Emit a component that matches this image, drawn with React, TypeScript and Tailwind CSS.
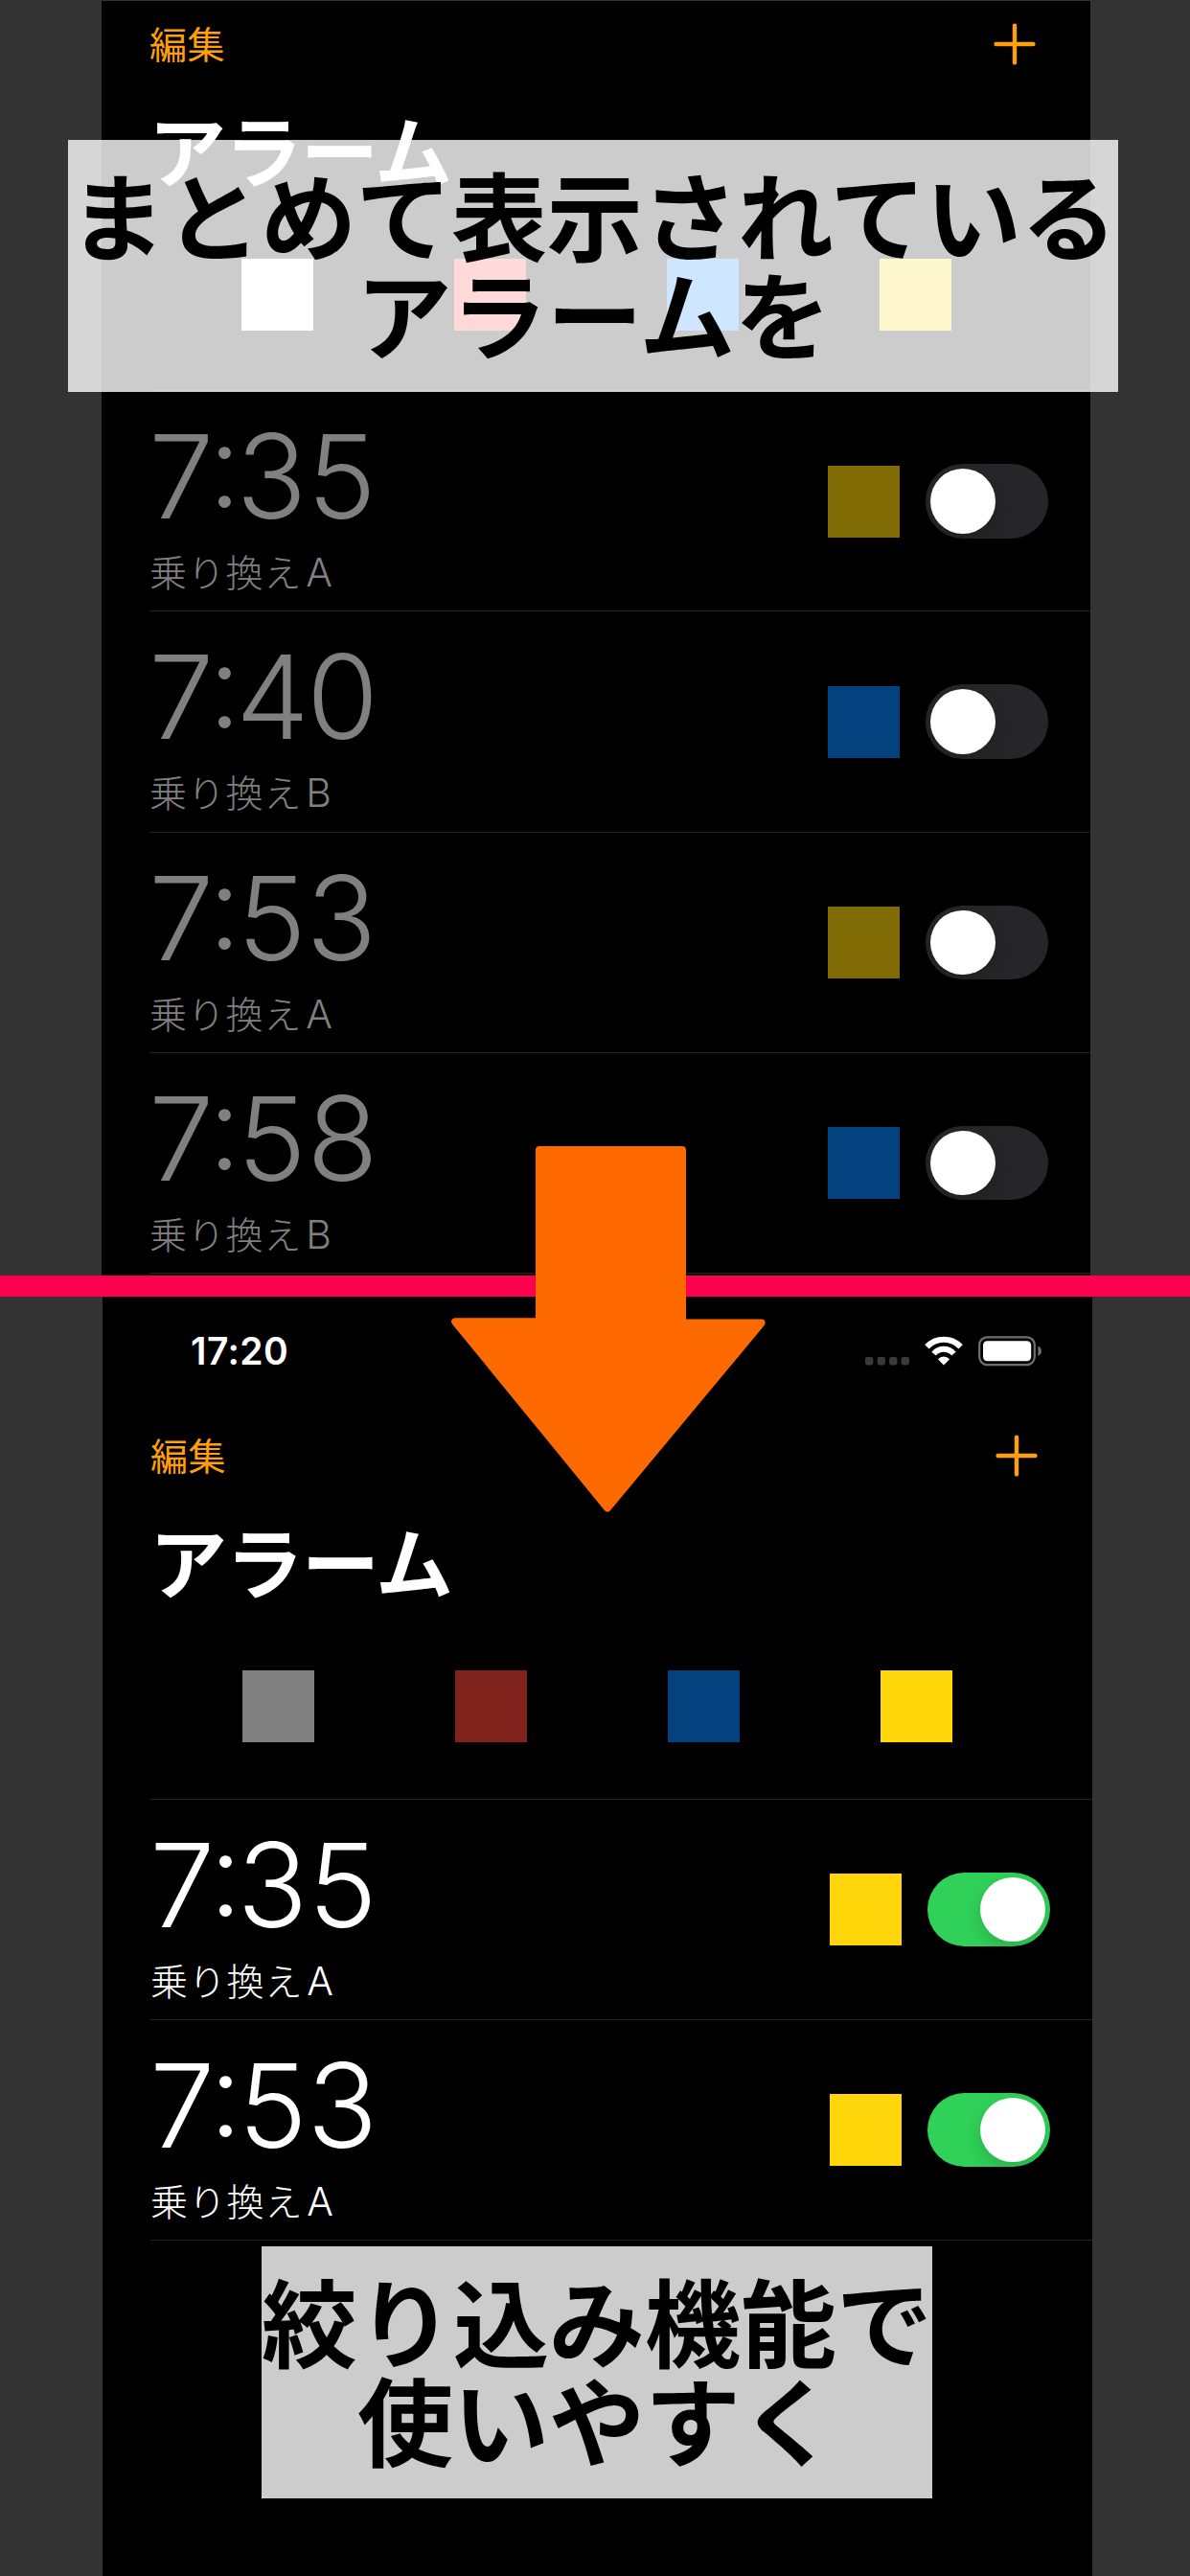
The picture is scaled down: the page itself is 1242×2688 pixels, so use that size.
import React from "react";

type Alarm = { hour: string; minute: string; label: string; line: string; color: string };

function PlusIcon() {
  return (
    <svg className="h-[44px] w-[44px]" viewBox="0 0 44 44" fill="none" stroke="#ff9f0a" strokeWidth="4.4" strokeLinecap="round">
      <path d="M22 2.6V41.4M2.6 22H41.4" />
    </svg>
  );
}

function Toggle({ on }: { on: boolean }) {
  return (
    <div
      className={
        on
          ? "flex h-[77.5px] w-[127.5px] items-center justify-end overflow-hidden rounded-full bg-[#30d158] px-[5px]"
          : "flex h-[77.5px] w-[127.5px] items-center justify-start overflow-hidden rounded-full bg-[#262628] px-[5px]"
      }
    >
      <div className="size-[67.5px] rounded-full bg-white shadow-[0_7px_18px_rgba(0,0,0,0.16)]" />
    </div>
  );
}

function AlarmRow({ alarm, on }: { alarm: Alarm; on: boolean }) {
  return (
    <div className="ml-[50px] flex h-[230.3px] items-start border-b border-[#222224]">
      <div className={on ? "flex-1 text-white" : "flex-1 text-[#808080]"}>
        <div className="mt-[29px] ml-[-6px] h-[120px] font-[Inter] text-[121.5px] leading-[120px] font-light tracking-[-5.5px] whitespace-nowrap tabular-nums">
          <span className="tracking-[-10.5px]">{alarm.hour}</span>
          <span className="relative -top-[12px]">:</span>
          {alarm.minute}
        </div>
        <div className="mt-[10px] h-[58px] text-[39px] leading-[56px] font-light tracking-[0.8px]">
          {alarm.label}
          <span className="ml-[4px] font-[Inter] text-[41px]">{alarm.line}</span>
        </div>
      </div>
      <div className={"mt-[77.5px] mr-[27px] size-[75px] " + alarm.color} />
      <div className="mt-[76px] mr-[44.5px]">
        <Toggle on={on} />
      </div>
    </div>
  );
}

function NavBar() {
  return (
    <div className="flex h-[88px] items-center justify-between pr-[57px] pl-[50px]">
      <span className="mb-[4px] text-[39px] leading-[56px] tracking-[0.6px] text-[#ff9f0a]">編集</span>
      <PlusIcon />
    </div>
  );
}

function Title() {
  return <h1 className="ml-[49px] h-[120px] text-[81px] leading-[112px] font-bold tracking-[-1.5px] text-white">アラーム</h1>;
}

function Filters({ colors }: { colors: string[] }) {
  return (
    <div className="ml-[146.3px] flex gap-[146.8px]">
      {colors.map((c) => (
        <div key={c} className={"size-[75px] " + c} />
      ))}
    </div>
  );
}

function StatusBar() {
  return (
    <div className="flex h-[72px] items-center pr-[52px] pl-[92px]">
      <span className="flex-1 font-[Inter] text-[39px] leading-[40px] font-semibold tracking-[0.4px] text-white">17:20</span>
      <svg className="h-[34px] w-[186px]" viewBox="902 1393 186 34">
        <g fill="#3a3a3c">
          <rect x="903" y="1416" width="8.4" height="8.4" rx="2.4" />
          <rect x="915.6" y="1416" width="8.4" height="8.4" rx="2.4" />
          <rect x="928.1" y="1416" width="8.4" height="8.4" rx="2.4" />
          <rect x="940.6" y="1416" width="8.4" height="8.4" rx="2.4" />
        </g>
        <g fill="none" stroke="#fff" strokeWidth="6">
          <path d="M967.4 1405.4A24.3 24.3 0 0 1 1002.6 1405.4" />
          <path d="M974.6 1412.6A13.8 13.8 0 0 1 995.4 1412.6" />
        </g>
        <path d="M985 1424.4L978.9 1418.2A8.4 8.4 0 0 1 991.1 1418.2Z" fill="#fff" />
        <rect x="1022.2" y="1395.3" width="57.6" height="28.8" rx="8" fill="none" stroke="#707070" strokeWidth="2.2" />
        <rect x="1026" y="1399.2" width="50.2" height="21" rx="4.5" fill="#fff" />
        <path d="M1083.4 1404.4Q1087 1406 1087 1409.7T1083.4 1415Z" fill="#707070" />
      </svg>
    </div>
  );
}

function Arrow() {
  return (
    <svg className="absolute top-[1190px] left-[464px] h-[394px] w-[342px]" viewBox="464 1190 342 394">
      <path
        d="M563 1200H712V1380.5H794.6L634 1573.4L475.2 1379.2H563Z"
        fill="#ff6a00"
        stroke="#ff6a00"
        strokeWidth="8"
        strokeLinejoin="round"
      />
    </svg>
  );
}

const before: Alarm[] = [
  { hour: "7", minute: "35", label: "乗り換え", line: "A", color: "bg-[#806b04]" },
  { hour: "7", minute: "40", label: "乗り換え", line: "B", color: "bg-[#04427f]" },
  { hour: "7", minute: "53", label: "乗り換え", line: "A", color: "bg-[#806b04]" },
  { hour: "7", minute: "58", label: "乗り換え", line: "B", color: "bg-[#04427f]" },
];

const after: Alarm[] = [
  { hour: "7", minute: "35", label: "乗り換え", line: "A", color: "bg-[#ffd60a]" },
  { hour: "7", minute: "53", label: "乗り換え", line: "A", color: "bg-[#ffd60a]" },
];

export default function App() {
  return (
    <div className="relative flex h-[2688px] w-[1242px] flex-col overflow-hidden bg-[#333333] font-['Noto_Sans_CJK_JP','Inter',sans-serif]">
      <section className="h-[1331px] shrink-0 pt-px">
        <div className="mr-[104px] ml-[106px] h-[1330px] overflow-hidden bg-black pt-[1px]">
          <NavBar />
          <div className="mt-[8px]">
            <Title />
          </div>
          <div className="mt-[52px]">
            <Filters colors={["bg-white", "bg-[#ff453a]", "bg-[#0a84ff]", "bg-[#ffd60a]"]} />
          </div>
          <div className="mt-[62px] ml-[50px] h-px bg-[#222224]" />
          {before.map((a) => (
            <AlarmRow key={a.minute} alarm={a} on={false} />
          ))}
        </div>
      </section>

      <div className="h-[22px] shrink-0 bg-[#ff0050]" />

      <section className="mr-[102px] ml-[107px] flex-1 bg-black pt-[21px]">
        <StatusBar />
        <div className="mt-[28.5px]">
          <NavBar />
        </div>
        <div className="mt-[8px]">
          <Title />
        </div>
        <div className="mt-[52px]">
          <Filters colors={["bg-[#808080]", "bg-[#80231d]", "bg-[#04427f]", "bg-[#ffd60a]"]} />
        </div>
        <div className="mt-[59px] ml-[50px] h-px bg-[#222224]" />
        {after.map((a) => (
          <AlarmRow key={a.minute} alarm={a} on />
        ))}
      </section>

      <Arrow />

      <div className="absolute top-[146px] left-[71px] h-[263px] w-[1096px] bg-white/80 pt-[24px] text-center text-[100px] leading-[103px] font-bold tracking-[-0.4px] whitespace-nowrap text-black">
        まとめて表示されている
        <br />
        アラームを
      </div>
      <div className="absolute top-[2344px] left-[273px] h-[263px] w-[700px] bg-white/80 pt-[24px] text-center text-[100px] leading-[103px] font-bold whitespace-nowrap text-black">
        絞り込み機能で
        <br />
        使いやすく
      </div>
    </div>
  );
}
